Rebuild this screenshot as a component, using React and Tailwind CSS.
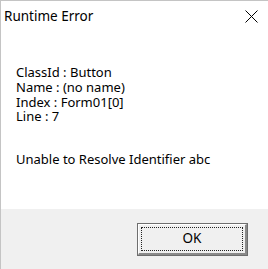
export default function App() {
  return (
    <div
      className="w-[268px] h-[269px] flex flex-col bg-white border-l border-t border-[#c4c4c4] text-black overflow-hidden"
      style={{ fontFamily: '"Noto Sans", "Open Sans", sans-serif' }}
    >
      {/* title bar */}
      <div className="h-[31px] flex items-center justify-between pl-[3px] pr-[10px]">
        <span className="text-[13.5px] leading-none">Runtime Error</span>
        <svg width="13" height="13" viewBox="0 0 13 13" className="mt-[-1px]">
          <path d="M0.5 0.5 L12.5 12.5 M12.5 0.5 L0.5 12.5" stroke="#000" strokeWidth="1" fill="none" />
        </svg>
      </div>

      {/* message */}
      <div className="flex-1 pl-[15px] pt-[33px] text-[13px] leading-[14.8px]">
        <div>ClassId : Button</div>
        <div>Name : (no name)</div>
        <div>Index : Form01[0]</div>
        <div>Line : 7</div>
        <div className="mt-[28px]">Unable to Resolve Identifier abc</div>
      </div>

      {/* footer */}
      <div className="h-[60px] bg-[#f0f0f0] flex justify-end items-start pt-[14px] pr-[20px]">
        <button className="w-[111px] h-[33px] border border-[#6e6e6e] bg-[#f0f0f0] p-0">
          <div className="w-full h-full border-t border-l border-white border-r-2 border-b-2 border-r-[#8a8a8a] border-b-[#8a8a8a] p-[2px]">
            <div className="w-full h-full border border-dotted border-[#222] flex items-center justify-center text-[13.5px] leading-none">
              OK
            </div>
          </div>
        </button>
      </div>
    </div>
  );
}
